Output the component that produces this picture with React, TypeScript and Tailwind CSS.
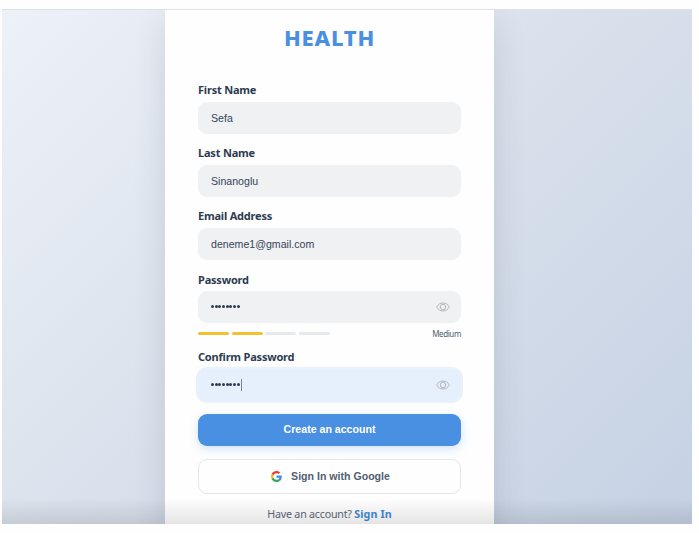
import React, { useState } from "react";

const labelFont = "font-['Noto_Sans',sans-serif]";
const inputFont = "font-['Liberation_Sans',sans-serif]";

function Eye() {
  return (
    <svg className="mr-[11px] -mt-px h-[10px] w-[14px] shrink-0" viewBox="0 0 14 10" fill="none" stroke="#b5b8bc" strokeWidth="1">
      <path d="M.7 5C2 2.400 4.200 1 7 1s5 1.400 6.300 4C12 7.600 9.800 9 7 9S2 7.600.7 5Z" />
      <circle cx="7" cy="5" r="2.700" />
    </svg>
  );
}

function GoogleLogo() {
  return (
    <svg className="h-[11px] w-[11px] shrink-0" viewBox="0 0 48 48">
      <path fill="#EA4335" d="M24 9.500c3.540 0 6.710 1.220 9.210 3.600l6.850-6.850C35.900 2.380 30.470 0 24 0 14.620 0 6.510 5.380 2.560 13.220l7.980 6.190C12.430 13.720 17.740 9.500 24 9.500z" />
      <path fill="#4285F4" d="M46.980 24.550c0-1.570-.15-3.090-.38-4.550H24v9.020h12.940c-.58 2.960-2.260 5.480-4.780 7.180l7.730 6c4.510-4.180 7.090-10.360 7.090-17.650z" />
      <path fill="#FBBC05" d="M10.530 28.590c-.48-1.450-.76-2.990-.76-4.590s.27-3.140.76-4.590l-7.980-6.190C.92 16.460 0 20.120 0 24c0 3.880.92 7.540 2.560 10.780l7.970-6.190z" />
      <path fill="#34A853" d="M24 48c6.480 0 11.930-2.130 15.890-5.810l-7.730-6c-2.150 1.450-4.920 2.300-8.160 2.300-6.260 0-11.570-4.220-13.470-9.910l-7.980 6.190C6.510 42.620 14.620 48 24 48z" />
    </svg>
  );
}

function Label({ children }: { children: React.ReactNode }) {
  return <label className={`${labelFont} block h-4 text-[11px] leading-4 font-bold tracking-[-0.200px] whitespace-nowrap text-[#2d3b51]`}>{children}</label>;
}

function Dots({ caret = false }: { caret?: boolean }) {
  return (
    <div className="-mt-px flex h-3 flex-1 items-center gap-[0.700px] pl-[13px]">
      {Array.from({ length: 8 }, (_, i) => (
        <span key={i} className="size-[3px] rounded-full bg-[#2d3b51]" />
      ))}
      {caret && <span className="h-3 w-px bg-[#7b8594]" />}
    </div>
  );
}

function TextField({ label, initial }: { label: string; initial: string }) {
  const [value, setValue] = useState(initial);
  return (
    <div className="mb-[11px]">
      <Label>{label}</Label>
      <input
        value={value}
        onChange={(e) => setValue(e.target.value)}
        className={`${inputFont} mt-1 block h-8 w-full rounded-[9px] bg-[#f0f1f3] px-[13px] text-[10.600px] text-[#34445a] outline-none`}
      />
    </div>
  );
}

export default function App() {
  return (
    <div className="h-[533px] w-[699px] overflow-hidden bg-[#fefefe] pt-[9px] pl-[2px]">
      <main className="relative flex h-[515px] w-[690px] overflow-hidden border-t border-[#dfe0e4] bg-[linear-gradient(135deg,#edf1f8_0%,#dae1ec_48%,#c5d1e4_100%)] pl-[163px]">
        <section className="h-[560px] w-[329px] shrink-0 bg-[#fefefe] px-[33px] shadow-[0_12px_30px_rgba(60,70,90,0.160)]">
          <h1 className={`${labelFont} mt-[12px] mb-[30px] h-[30px] text-center text-[22px] leading-[30px] font-extrabold tracking-[0.800px] text-[#4a90e2]`}>HEALTH</h1>
          <div className="pb-px">
            <TextField label="First Name" initial="Sefa" />
            <TextField label="Last Name" initial="Sinanoglu" />
            <TextField label="Email Address" initial="deneme1@gmail.com" />
          </div>
          <Label>Password</Label>
          <div className="mt-[3px] flex h-8 items-center rounded-[9px] bg-[#f0f1f3]">
            <Dots />
            <Eye />
          </div>
          <div className="flex h-[21px] items-center justify-between">
            <div className="flex gap-[2.600px]">
              <i className="h-[3px] w-[31px] rounded-full bg-[#f5c02f]" />
              <i className="h-[3px] w-[31px] rounded-full bg-[#f5c02f]" />
              <i className="h-[3px] w-[31px] rounded-full bg-[#e8e9ec]" />
              <i className="h-[3px] w-[31px] rounded-full bg-[#e8e9ec]" />
            </div>
            <span className={`${labelFont} text-[8px] tracking-[-0.400px] text-[#4f5d70]`}>Medium</span>
          </div>
          <div className="h-[5px]" />
          <Label>Confirm Password</Label>
          <div className="mt-[4px] flex h-8 items-center rounded-[9px] bg-[#e6f0fd] shadow-[0_0_0_2px_#e9f2fc]">
            <Dots caret />
            <Eye />
          </div>
          <button className={`${inputFont} mt-[13px] block h-8 w-full rounded-[9px] bg-[#4a90e2] text-[10.600px] font-bold text-white shadow-[0_3px_10px_rgba(74,144,226,0.250)]`}>Create an account</button>
          <button className={`${inputFont} mt-[13px] flex h-[35px] w-full items-center justify-center gap-[9px] rounded-[9px] border border-[#e4e6e9] bg-[#fefefe] pl-[2px] text-[10.600px] font-bold text-[#516074]`}>
            <GoogleLogo />
            Sign In with Google
          </button>
          <p className={`${labelFont} mt-[12px] text-center text-[10.700px] leading-4 tracking-[-0.220px] whitespace-nowrap text-[#5b687a]`}>
            Have an account? <a className="font-bold tracking-[0.100px] text-[#438ad9]">Sign In</a>
          </p>
        </section>
        <div className="pointer-events-none absolute inset-x-0 bottom-0 h-[26px] bg-linear-to-b from-transparent to-black/10" />
      </main>
    </div>
  );
}
